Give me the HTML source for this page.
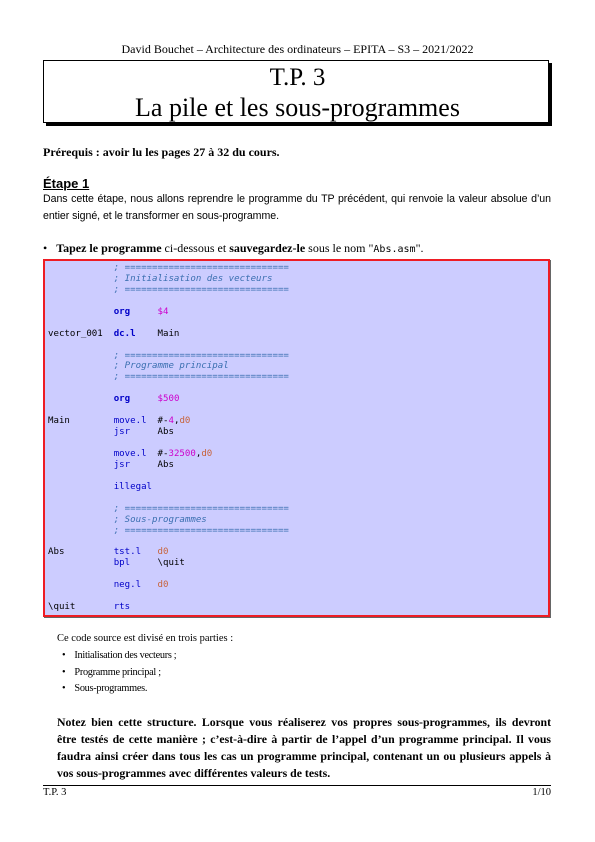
<!DOCTYPE html>
<html><head><meta charset="utf-8"><style>
body{margin:0;width:595px;height:842px;background:#fff;position:relative;font-family:"Liberation Serif",serif;color:#000;overflow:hidden}
.a{position:absolute;white-space:nowrap}
.s{font-size:10.5px}
.code{position:absolute;left:43px;top:259px;width:503px;height:354px;background:#ccccff;border:2px solid #ee1c24;box-shadow:1px 1px 0 #666}
.c{position:absolute;font-family:"DejaVu Sans Mono",monospace;font-size:9.1px;white-space:pre;line-height:10.94px}
.cm{color:#3a6fb0;font-style:italic}
.k{color:#0000c8;font-weight:bold}
.k2{color:#0000c8}
.n{color:#cc00cc}
.r{color:#c8643c}
.j{text-align:justify;text-align-last:justify;white-space:nowrap;height:17px}
</style></head><body>
<div class="a" style="left:0;width:595px;text-align:center;top:42px;font-size:12px">David Bouchet – Architecture des ordinateurs – EPITA – S3 – 2021/2022</div>
<div style="position:absolute;left:43px;top:60px;width:504px;height:61px;border:1px solid #000;box-shadow:3px 3px 0 #000"></div>
<div class="a" style="left:0;width:595px;text-align:center;top:64px;font-size:25px;line-height:28px">T.P. 3</div>
<div class="a" style="left:0;width:595px;text-align:center;top:93px;font-size:26px;line-height:30px">La pile et les sous-programmes</div>
<div class="a" style="left:43px;top:145px;font-weight:bold;font-size:12px">Prérequis : avoir lu les pages 27 à 32 du cours.</div>
<div class="a" style="left:43px;top:176px;font-family:'Liberation Sans',sans-serif;font-weight:bold;font-size:13px;text-decoration:underline">Étape 1</div>
<div class="a" style="left:43px;top:191px;width:508px;white-space:normal;text-align:justify;text-align-last:left;font-family:'Liberation Sans',sans-serif;font-size:10.6px;line-height:17px;letter-spacing:-0.05px">Dans cette étape, nous allons reprendre le programme du TP précédent, qui renvoie la valeur absolue d’un entier signé, et le transformer en sous-programme.</div>
<div class="a" style="left:43px;top:241px;font-size:12px">•&nbsp;&nbsp;&nbsp;<b>Tapez le programme</b> ci-dessous et <b>sauvegardez-le</b> sous le nom "<span style="font-family:'DejaVu Sans Mono',monospace;font-size:10px">Abs.asm</span>".</div>
<div class="code"></div>
<div class="c" style="left:48px;top:263px"><span class="cm">            ; ==============================
            ; Initialisation des vecteurs
            ; ==============================</span>

            <span class="k">org</span>     <span class="n">$4</span>

vector_001  <span class="k">dc.l</span>    Main

            <span class="cm">; ==============================
            ; Programme principal
            ; ==============================</span>

            <span class="k">org</span>     <span class="n">$500</span>

Main        <span class="k2">move.l</span>  #-<span class="n">4</span>,<span class="r">d0</span>
            <span class="k2">jsr</span>     Abs

            <span class="k2">move.l</span>  #-<span class="n">32500</span>,<span class="r">d0</span>
            <span class="k2">jsr</span>     Abs

            <span class="k2">illegal</span>

            <span class="cm">; ==============================
            ; Sous-programmes
            ; ==============================</span>

Abs         <span class="k2">tst.l</span>   <span class="r">d0</span>
            <span class="k2">bpl</span>     \quit

            <span class="k2">neg.l</span>   <span class="r">d0</span>

\quit       <span class="k2">rts</span></div>
<div class="a s" style="left:57px;top:633px">Ce code source est divisé en trois parties :</div>
<div class="a" style="left:62px;top:650px;font-size:10.3px;letter-spacing:-0.3px">•&nbsp;&nbsp;&nbsp;&nbsp;Initialisation des vecteurs ;</div>
<div class="a" style="left:62px;top:667px;font-size:10.3px;letter-spacing:-0.3px">•&nbsp;&nbsp;&nbsp;&nbsp;Programme principal ;</div>
<div class="a" style="left:62px;top:683px;font-size:10.3px;letter-spacing:-0.3px">•&nbsp;&nbsp;&nbsp;&nbsp;Sous-programmes.</div>
<div class="a" style="left:57px;top:714px;width:494px;white-space:normal;font-weight:bold;line-height:17px;font-size:11.8px">
<div class="j">Notez bien cette structure. Lorsque vous réaliserez vos propres sous-programmes, ils devront</div>
<div class="j">être testés de cette manière ; c’est-à-dire à partir de l’appel d’un programme principal. Il vous</div>
<div class="j">faudra ainsi créer dans tous les cas un programme principal, contenant un ou plusieurs appels à</div>
<div style="white-space:nowrap">vos sous-programmes avec différentes valeurs de tests.</div>
</div>
<div style="position:absolute;left:43px;top:785px;width:508px;border-top:1px solid #000"></div>
<div class="a s" style="left:43px;top:787px">T.P. 3</div>
<div class="a s" style="right:44px;top:787px">1/10</div>
</body></html>
